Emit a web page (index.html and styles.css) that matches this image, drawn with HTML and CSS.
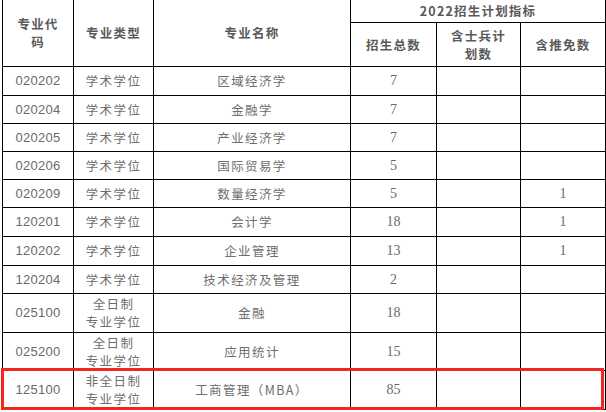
FILE: index.html
```html
<!DOCTYPE html>
<html lang="zh-CN">
<head>
<meta charset="utf-8">
<title>2022招生计划指标</title>
<link rel="stylesheet" href="styles.css">
</head>
<body>
<div class="wrap">
<table class="plan">
  <colgroup>
    <col class="c1"><col class="c2"><col class="c3"><col class="c4"><col class="c5"><col class="c6">
  </colgroup>
  <thead>
    <tr class="h1">
      <th rowspan="2" class="hd">专业代<br>码</th>
      <th rowspan="2" class="hd">专业类型</th>
      <th rowspan="2" class="hd">专业名称</th>
      <th colspan="3" class="hd top">2022招生计划指标</th>
    </tr>
    <tr class="h2">
      <th class="hd">招生总数</th>
      <th class="hd">含士兵计<br>划数</th>
      <th class="hd">含推免数</th>
    </tr>
  </thead>
  <tbody>
    <tr class="r29"><td class="code">020202</td><td>学术学位</td><td>区域经济学</td><td class="num">7</td><td></td><td></td></tr>
    <tr class="r28"><td class="code">020204</td><td>学术学位</td><td>金融学</td><td class="num">7</td><td></td><td></td></tr>
    <tr class="r28"><td class="code">020205</td><td>学术学位</td><td>产业经济学</td><td class="num">7</td><td></td><td></td></tr>
    <tr class="r28"><td class="code">020206</td><td>学术学位</td><td>国际贸易学</td><td class="num">5</td><td></td><td></td></tr>
    <tr class="r28"><td class="code">020209</td><td>学术学位</td><td>数量经济学</td><td class="num">5</td><td></td><td class="num">1</td></tr>
    <tr class="r29"><td class="code">120201</td><td>学术学位</td><td>会计学</td><td class="num">18</td><td></td><td class="num">1</td></tr>
    <tr class="r29"><td class="code">120202</td><td>学术学位</td><td>企业管理</td><td class="num">13</td><td></td><td class="num">1</td></tr>
    <tr class="r28"><td class="code">120204</td><td>学术学位</td><td>技术经济及管理</td><td class="num">2</td><td></td><td></td></tr>
    <tr class="r39"><td class="code">025100</td><td>全日制<br>专业学位</td><td>金融</td><td class="num">18</td><td></td><td></td></tr>
    <tr class="r38"><td class="code">025200</td><td>全日制<br>专业学位</td><td>应用统计</td><td class="num">15</td><td></td><td></td></tr>
    <tr class="r39"><td class="code">125100</td><td>非全日制<br>专业学位</td><td>工商管理（MBA）</td><td class="num">85</td><td></td><td></td></tr>
  </tbody>
</table>
<div class="highlight"></div>
</div>
</body>
</html>
```
FILE: styles.css
```css
html, body {
  margin: 0;
  padding: 0;
  background: #ffffff;
}
body {
  padding-left: 2px;
  font-family: "Noto Sans CJK SC", "Liberation Sans", sans-serif;
}
.wrap {
  position: relative;
  width: 603px;
}
.plan {
  border-collapse: collapse;
  table-layout: fixed;
  width: 603px;
  margin-top: -1px;
}
.c1 { width: 71px; }
.c2 { width: 80px; }
.c3 { width: 197px; }
.c4 { width: 86px; }
.c5 { width: 84px; }
.c6 { width: 85px; }
.plan th, .plan td {
  border: 1px solid #000;
  padding: 0;
  text-align: center;
  vertical-align: middle;
  font-size: 12.5px;
  line-height: 18px;
  letter-spacing: 1.4px;
  color: #6e6e6e;
  font-weight: normal;
}
.plan th.hd {
  font-weight: bold;
  color: #5a5a5a;
  letter-spacing: 1.2px;
}
.h1 { height: 23px; }
.h2 { height: 44px; }
.r28 { height: 28px; }
.r29 { height: 29px; }
.r38 { height: 38px; }
.r39 { height: 39px; }
.plan td.code {
  font-family: "Liberation Sans", sans-serif;
  font-size: 13px;
  letter-spacing: 0.3px;
  color: #6a6a6a;
}
.plan td.num {
  font-family: "Liberation Serif", serif;
  font-size: 14px;
  letter-spacing: 0;
  color: #6a6a6a;
}
.highlight {
  position: absolute;
  left: -1px;
  top: 369px;
  width: 597px;
  height: 36px;
  border: 3px solid #f2281e;
}
```
